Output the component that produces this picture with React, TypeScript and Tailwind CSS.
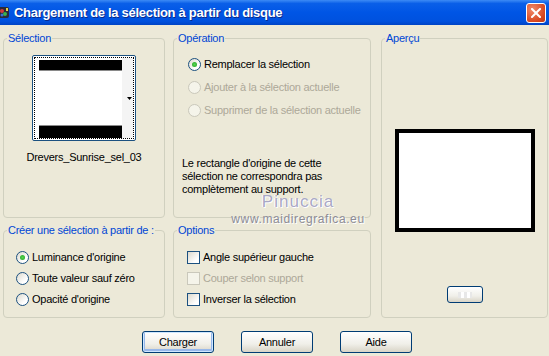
import React from "react";

const FONT = "font-['Liberation_Sans',Arial,sans-serif]";

function Legend({ children }: { children: React.ReactNode }) {
  return (
    <legend className="ml-[3px] px-[1px] text-[11px] leading-[12px] text-[#0046d5]">
      {children}
    </legend>
  );
}

function Radio({
  label,
  checked = false,
  disabled = false,
}: {
  label: string;
  checked?: boolean;
  disabled?: boolean;
}) {
  return (
    <div className="flex h-[13px] items-center gap-[3px] whitespace-nowrap">
      <span
        className={
          disabled
            ? "flex size-[13px] shrink-0 items-center justify-center rounded-full border border-[#cac8bb] bg-[#f5f4ea]"
            : "flex size-[13px] shrink-0 items-center justify-center rounded-full border border-[#1c5180] bg-[linear-gradient(135deg,#dcd9cd,#ffffff_70%)]"
        }
      >
        {checked ? (
          <span className="size-[5px] rounded-full bg-[radial-gradient(circle,#55d551,#21a121)]" />
        ) : null}
      </span>
      <span className={disabled ? "text-[#aca899]" : "text-black"}>{label}</span>
    </div>
  );
}

function Check({ label, disabled = false }: { label: string; disabled?: boolean }) {
  return (
    <div className="flex h-[13px] items-center gap-[3px] whitespace-nowrap">
      <span
        className={
          disabled
            ? "size-[13px] shrink-0 border border-[#cac8bb] bg-[#f5f4ea]"
            : "size-[13px] shrink-0 border border-[#1c5180] bg-[linear-gradient(135deg,#dcd9cd,#ffffff_75%)]"
        }
      />
      <span className={disabled ? "text-[#aca899]" : "text-black"}>{label}</span>
    </div>
  );
}

function XpButton({
  children,
  primary = false,
  className = "",
}: {
  children?: React.ReactNode;
  primary?: boolean;
  className?: string;
}) {
  return (
    <button
      className={
        "flex items-center justify-center rounded-[3px] border border-[#003c74] bg-[linear-gradient(to_bottom,#ffffff,#f0efe9_60%,#d8d4c6)] text-[11px] text-black " +
        (primary ? "shadow-[inset_0_0_0_1px_#cee7ff,inset_0_-1px_0_2px_#98b8ea] " : "") +
        className
      }
    >
      {children}
    </button>
  );
}

function Thumbnail() {
  return (
    <div className="h-[86px] w-[104px] rounded-[2px] border border-[#1c5180] bg-white p-[1px]">
      <div className="flex h-full border border-dotted border-black">
        <div className="flex flex-1 flex-col pt-[2px] pl-[4px]">
          <div className="h-[11px] border-b border-[#8a8a8a] bg-black" />
          <div className="flex-1 bg-white" />
          <div className="h-[13px] border-t border-[#8a8a8a] bg-black" />
        </div>
        <div className="flex w-[11px] items-center justify-end bg-[#f4f4f4] pr-[1px]">
          <svg width="5" height="3" viewBox="0 0 5 3">
            <path d="M0 0h5L2.5 3z" fill="#000" />
          </svg>
        </div>
      </div>
    </div>
  );
}

export default function App() {
  return (
    <div
      className={`relative h-[356px] w-[549px] overflow-hidden bg-[#ece9d8] ${FONT} text-[11px] tracking-[-0.25px]`}
    >
      {/* title bar */}
      <div className="flex h-[25px] items-center bg-[linear-gradient(to_bottom,#3d8bf5_0%,#0a5fe8_14%,#0055e5_50%,#0051de_85%,#0044c4_100%)] pr-[3px]">
        <svg width="12" height="13" viewBox="0 0 12 13" className="ml-[-2px]">
          <rect x="0" y="1" width="11" height="11" rx="2" fill="#2a2a3a" />
          <circle cx="4" cy="5" r="2" fill="#d43b3b" />
          <circle cx="7" cy="8" r="2" fill="#3bb24a" />
          <circle cx="4" cy="9" r="1.5" fill="#3b6fd4" />
          <rect x="8" y="2" width="2" height="3" fill="#e8d24a" />
        </svg>
        <span className="ml-[4px] text-[13px] font-bold tracking-[-0.3px] text-white [text-shadow:1px_1px_0_#0a2a8a]">
          Chargement de la sélection à partir du disque
        </span>
        <div className="ml-auto flex size-[20px] items-center justify-center rounded-[3px] border border-white bg-[radial-gradient(circle_at_30%_30%,#f08a6a,#d8461f_70%,#b83a18)]">
          <svg width="10" height="10" viewBox="0 0 10 10">
            <path d="M1 1l8 8M9 1L1 9" stroke="#fff" strokeWidth="2" strokeLinecap="square" />
          </svg>
        </div>
      </div>

      {/* body */}
      <div className="grid grid-cols-[162px_198px_169px] grid-rows-[186px_94px] gap-x-[8px] gap-y-[6px] pt-[7px] pl-[3px]">
        <fieldset className="col-start-1 row-start-1 rounded-[4px] border border-[#d0d0bf]">
          <Legend>Sélection</Legend>
          <div className="flex flex-col items-center pt-[11px]">
            <Thumbnail />
            <div className="mt-[10px] leading-[13px] text-black">Drevers_Sunrise_sel_03</div>
          </div>
        </fieldset>

        <fieldset className="col-start-2 row-start-1 rounded-[4px] border border-[#d0d0bf]">
          <Legend>Opération</Legend>
          <div className="flex flex-col gap-[10px] pt-[14px] pl-[14px]">
            <Radio label="Remplacer la sélection" checked />
            <Radio label="Ajouter à la sélection actuelle" disabled />
            <Radio label="Supprimer de la sélection actuelle" disabled />
          </div>
          <p className="mt-[40px] pl-[8px] leading-[13px] text-black">
            Le rectangle d'origine de cette
            <br />
            sélection ne correspondra pas
            <br />
            complètement au support.
          </p>
        </fieldset>

        <fieldset className="col-start-3 row-span-2 row-start-1 ml-[2px] rounded-[4px] border border-[#d0d0bf]">
          <Legend>Aperçu</Legend>
          <div className="flex flex-col items-center pt-[85px]">
            <div className="h-[103px] w-[140px] border-[4px] border-black bg-white" />
            <XpButton className="mt-[54px] h-[17px] w-[36px]">
              <span className="h-[6px] w-[14px] bg-[repeating-linear-gradient(90deg,#e8e8e8_0_3px,#ffffff_3px_6px)]" />
            </XpButton>
          </div>
        </fieldset>

        <fieldset className="col-start-1 row-start-2 rounded-[4px] border border-[#d0d0bf]">
          <Legend>Créer une sélection à partir de :</Legend>
          <div className="flex flex-col gap-[8px] pt-[15px] pl-[12px]">
            <Radio label="Luminance d'origine" checked />
            <Radio label="Toute valeur sauf zéro" />
            <Radio label="Opacité d'origine" />
          </div>
        </fieldset>

        <fieldset className="col-start-2 row-start-2 rounded-[4px] border border-[#d0d0bf]">
          <Legend>Options</Legend>
          <div className="flex flex-col gap-[8px] pt-[15px] pl-[13px]">
            <Check label="Angle supérieur gauche" />
            <Check label="Couper selon support" disabled />
            <Check label="Inverser la sélection" />
          </div>
        </fieldset>
      </div>

      {/* buttons */}
      <div className="mt-[13px] flex justify-center gap-[27px] pl-[5px]">
        <XpButton primary className="h-[22px] w-[72px]">
          Charger
        </XpButton>
        <XpButton className="h-[22px] w-[72px]">Annuler</XpButton>
        <XpButton className="h-[22px] w-[72px]">Aide</XpButton>
      </div>

      {/* watermark */}
      <div className="pointer-events-none absolute top-[194px] left-[236px] flex w-[124px] flex-col items-center">
        <span className="text-[17px] leading-[16px] tracking-[1px] text-[#a9a8c6] [text-shadow:1px_1px_0_#ffffff,-1px_0_0_#ffffff]">
          Pinuccia
        </span>
        <span className="mt-[3px] text-[12px] leading-[13px] tracking-[0.6px] text-[#8c8c96] [text-shadow:1px_1px_0_#ffffff]">
          www.maidiregrafica.eu
        </span>
      </div>
    </div>
  );
}
